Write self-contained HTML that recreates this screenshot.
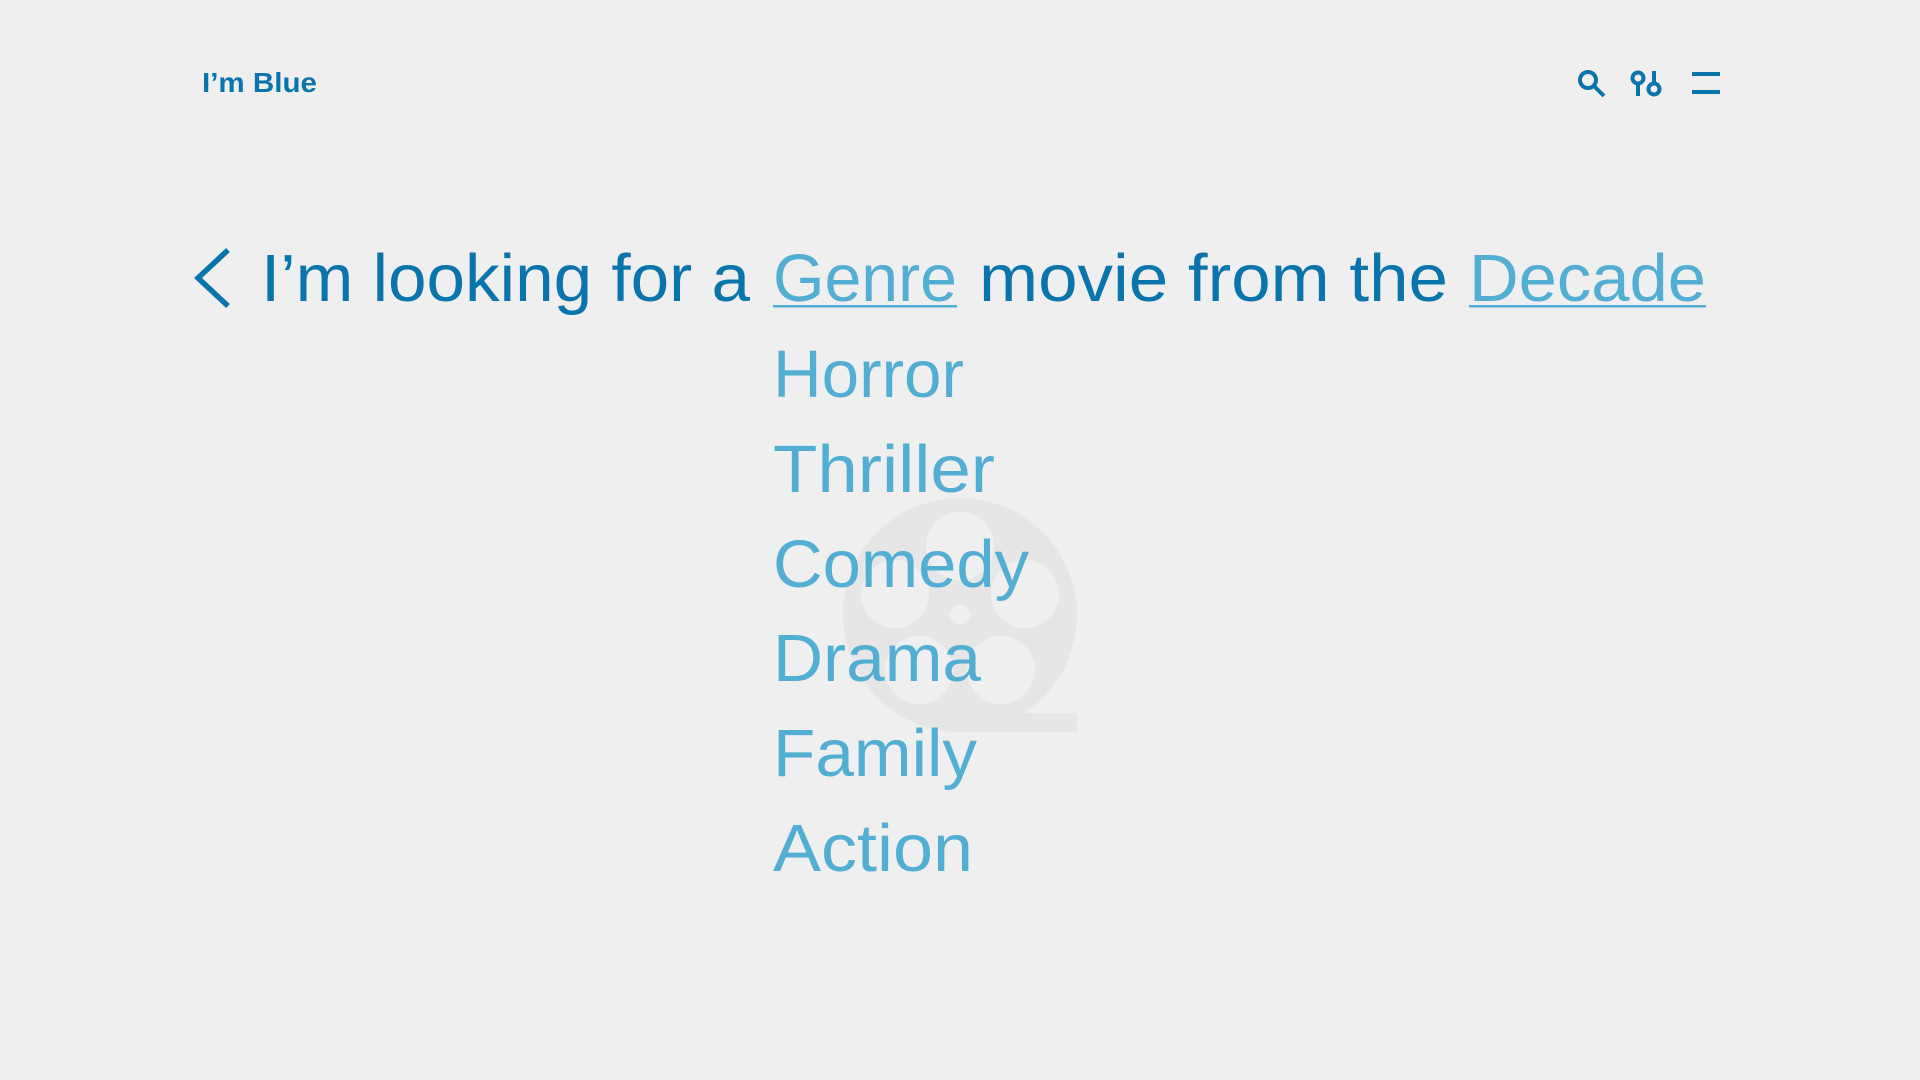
<!DOCTYPE html>
<html><head><meta charset="utf-8"><style>
html,body{margin:0;padding:0;background:#efefef;width:1920px;height:1080px;overflow:hidden}
svg{display:block}
text{font-family:"Liberation Sans",sans-serif}
</style></head><body>
<svg width="1920" height="1080" viewBox="0 0 1920 1080">
<rect width="1920" height="1080" fill="#efefef"/>
<g fill="#e6e6e6">
<circle cx="960" cy="615" r="117"/>
<rect x="960" y="713" width="117" height="19"/>
</g>
<g fill="#efefef">
<circle cx="960" cy="615" r="10"/>
<circle cx="960" cy="546" r="34"/>
<circle cx="895" cy="594" r="34"/>
<circle cx="1025" cy="594" r="34"/>
<circle cx="919" cy="670" r="34"/>
<circle cx="1001" cy="670" r="34"/>
</g>
<text x="202" y="92" font-size="28" font-weight="bold" fill="#0a75ad" textLength="115" lengthAdjust="spacingAndGlyphs">I’m Blue</text>
<g stroke="#0a75ad" stroke-width="4" fill="none">
<circle cx="1588" cy="80" r="8"/>
<line x1="1594" y1="86" x2="1604" y2="96"/>
<circle cx="1638" cy="78" r="5.5"/>
<line x1="1638" y1="84" x2="1638" y2="96"/>
<circle cx="1654" cy="89" r="5.5"/>
<line x1="1654" y1="71" x2="1654" y2="83"/>
<line x1="1692" y1="74" x2="1720" y2="74"/>
<line x1="1692" y1="92" x2="1720" y2="92"/>
</g>
<polyline points="228,250 198,278 228,306" fill="none" stroke="#0a75ad" stroke-width="5.5"/>
<g font-size="67">
<text x="261" y="301" fill="#0a75ad" textLength="489" lengthAdjust="spacingAndGlyphs">I’m looking for a</text>
<text x="773" y="301" fill="#52aed3" textLength="184" lengthAdjust="spacingAndGlyphs">Genre</text>
<text x="979" y="301" fill="#0a75ad" textLength="469" lengthAdjust="spacingAndGlyphs">movie from the</text>
<text x="1469" y="301" fill="#52aed3" textLength="237" lengthAdjust="spacingAndGlyphs">Decade</text>
</g>
<rect x="773" y="305" width="184" height="2.5" fill="#52aed3"/>
<rect x="1469" y="305" width="237" height="2.5" fill="#52aed3"/>
<g font-size="67" fill="#52aed3">
<text x="773" y="397" textLength="191" lengthAdjust="spacingAndGlyphs">Horror</text>
<text x="773" y="492" textLength="222" lengthAdjust="spacingAndGlyphs">Thriller</text>
<text x="773" y="587" textLength="256" lengthAdjust="spacingAndGlyphs">Comedy</text>
<text x="773" y="681" textLength="208" lengthAdjust="spacingAndGlyphs">Drama</text>
<text x="773" y="776" textLength="204" lengthAdjust="spacingAndGlyphs">Family</text>
<text x="773" y="871" textLength="200" lengthAdjust="spacingAndGlyphs">Action</text>
</g>
</svg>
</body></html>
